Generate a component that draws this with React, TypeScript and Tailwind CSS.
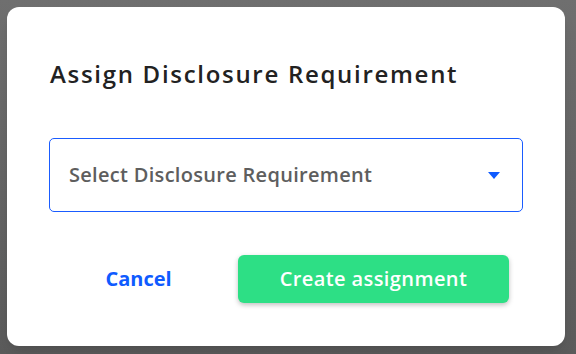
const App = () => {
    return (
        <div className="w-[576px] h-[354px] bg-gradient-to-b from-[#6f6f6f] to-[#5b5b5b] p-[7px] pr-[11px] pb-[8px]" style={{ fontFamily: '"Open Sans", "Noto Sans", sans-serif' }}>
            <div className="w-full h-full bg-white rounded-[12px] shadow-lg px-[42px] pt-[51px]">
                <h1 className="text-[24px] leading-[32px] font-semibold tracking-[1.7px] text-[#222222] pl-[1px]">Assign Disclosure Requirement</h1>
                <div className="mt-[48px] h-[74px] w-[474px] border border-[#1a5cff] rounded-[5px] flex items-center justify-between pl-[19px] pr-[22px]">
                    <span className="text-[20px] font-semibold tracking-[0.3px] text-[#5e5e5e]">Select Disclosure Requirement</span>
                    <svg width="12" height="7" viewBox="0 0 12 7">
                        <path d="M0 0 H12 L6 7 Z" fill="#0f5bff" />
                    </svg>
                </div>
                <div className="mt-[43px] flex items-center">
                    <button className="w-[189px] pr-[10px] text-[20px] font-bold text-[#0f5bff] text-center">Cancel</button>
                    <button className="w-[271px] h-[48px] rounded-[6px] bg-[#2ddf85] text-white text-[20px] font-semibold tracking-[0.4px] shadow-[0_2px_5px_rgba(0,0,0,0.25)]">
                        Create assignment
                    </button>
                </div>
            </div>
        </div>
    );
};

export default App;
